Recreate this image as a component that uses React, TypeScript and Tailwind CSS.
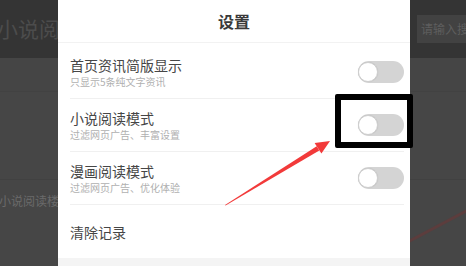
import React from "react";

const font = { fontFamily: '"Noto Sans CJK SC", "Noto Sans", sans-serif' };

function Toggle() {
  return (
    <div className="relative h-[22px] w-[46px] shrink-0 rounded-full bg-[#d4d4d4]">
      <div className="absolute left-0 top-[1px] h-[20px] w-[20px] rounded-full border border-[#cfcfcf] bg-white shadow-[0_0_1px_rgba(0,0,0,0.15)]" />
    </div>
  );
}

function Row({ title, sub, toggle = true, last = false }: { title: string; sub?: string; toggle?: boolean; last?: boolean }) {
  return (
    <div className={`ml-[12px] mr-[6px] flex h-[53px] items-center justify-between ${last ? "" : "border-b border-[#f0f0f0]"}`}>
      <div className="flex flex-col">
        <div className="text-[14px] leading-[20px] text-[#464646]">{title}</div>
        {sub && <div className="text-[10px] leading-[14px] text-[#b0b0b0]">{sub}</div>}
      </div>
      {toggle && <Toggle />}
    </div>
  );
}

export default function App() {
  return (
    <div className="relative h-[266px] w-[466px] overflow-hidden bg-[#464646]" style={font}>
      {/* background page */}
      <div className="flex h-full flex-col">
        <div className="flex h-[58px] items-center justify-between bg-[#343434]">
          <div className="ml-[-3px] text-[21px] text-[#4c4c4c]">小说阅读模式</div>
          <div className="mr-[-20px] flex h-[28px] w-[69px] items-center bg-[#424242] pl-[4px] text-[12px] text-[#5e5e5e]">请输入搜索</div>
        </div>
        <div className="h-[34px] border-b border-[#424242] bg-[#454545]" />
        <div className="h-[88px] border-b border-[#414141]" />
        <div className="flex h-[42px] items-center text-[12px] text-[#6a6a6a]">
          <span className="ml-[-1px]">小说阅读楼层</span>
        </div>
      </div>
      <svg className="absolute left-0 top-0" width="466" height="266">
        <line x1="370" y1="262" x2="470" y2="209" stroke="#5c3d3d" strokeWidth="3" />
      </svg>

      {/* modal */}
      <div className="absolute left-[58px] top-0 flex h-[266px] w-[352px] flex-col bg-white">
        <div className="flex h-[43px] items-center justify-center border-b border-[#f2f2f2] text-[16px] font-bold text-[#3a3a3a]">
          设置
        </div>
        <div className="pt-[3px]">
          <Row title="首页资讯简版显示" sub="只显示5条纯文字资讯" />
          <Row title="小说阅读模式" sub="过滤网页广告、丰富设置" />
          <Row title="漫画阅读模式" sub="过滤网页广告、优化体验" />
          <Row title="清除记录" toggle={false} last />
        </div>
        <div className="flex-1 bg-[#f4f4f4]" />
      </div>

      {/* annotations */}
      <div className="absolute left-[335px] top-[94px] h-[54px] w-[78px] rounded-[2px] border-[6px] border-black" />
      <svg className="absolute left-0 top-0" width="466" height="266">
        <polygon points="225,205 225.6,205.6 319.3,150.4 316.7,146.2" fill="#f23a3a" />
        <polygon points="330,141 314.6,143 321.4,153.6" fill="#f23a3a" />
      </svg>
    </div>
  );
}
